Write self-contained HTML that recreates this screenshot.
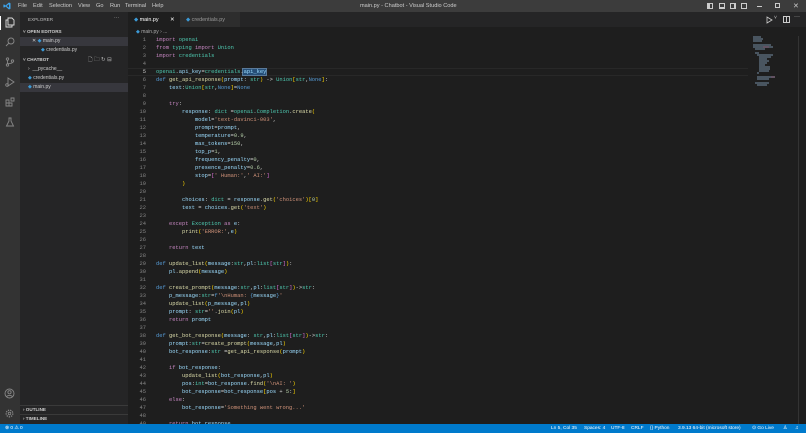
<!DOCTYPE html>
<html><head><meta charset="utf-8"><style>
*{margin:0;padding:0;box-sizing:border-box}
body{width:806px;height:433px;overflow:hidden;background:#1e1e1e;font-family:"Liberation Sans",sans-serif;position:relative;color:#ccc}
.abs{position:absolute}
#title{left:0;top:0;width:806px;height:12px;background:#3c3c3c;font-size:5.6px;color:#ccc}
#title span{position:absolute;top:3px}
#act{left:0;top:12px;width:20px;height:412px;background:#333}
#side{left:20px;top:12px;width:108px;height:412px;background:#252526;font-size:5px}
#side div{position:absolute;white-space:nowrap}
#tabs{left:128px;top:12px;width:678px;height:15px;background:#252526}
#status{left:0;top:424px;width:806px;height:9px;background:#007acc;color:#fff;font-size:4.8px}
#status span{position:absolute;top:2px;white-space:nowrap}
pre{position:absolute;left:156px;top:36px;font-family:"Liberation Mono",monospace;font-size:5.42px;line-height:8px;color:#d4d4d4}
#ln{position:absolute;left:128px;top:36px;width:18px;text-align:right;font-family:"Liberation Mono",monospace;font-size:5.42px;line-height:8px;color:#858585}
.k{color:#c586c0}.b{color:#569cd6}.f{color:#dcdcaa}.v{color:#9cdcfe}.t{color:#4ec9b0}.s{color:#ce9178}.n{color:#b5cea8}.y{color:#ffd700}.p{color:#da70d6}.c{color:#179fff}
svg{position:absolute}
</style></head><body>
<div id="title" class="abs">
<svg style="left:3px;top:2px" width="8" height="8" viewBox="0 0 8 8"><path d="M6 0.5L7.5 1.2V6.8L6 7.5L2.5 4.5L1 5.6L0.4 5.2V2.8L1 2.4L2.5 3.5ZM6 2.2L3.6 4L6 5.8Z" fill="#3ca2ea"/></svg>
<span style="left:18px">File</span><span style="left:33px">Edit</span><span style="left:49px">Selection</span><span style="left:78px">View</span><span style="left:96px">Go</span><span style="left:110px">Run</span><span style="left:125px">Terminal</span><span style="left:152px">Help</span>
<span style="left:360px">main.py - Chatbot - Visual Studio Code</span>
<div class="abs" style="left:707px;top:3px;width:6px;height:6px;border:1px solid #ccc;border-left-width:3px"></div>
<div class="abs" style="left:719px;top:3px;width:6px;height:6px;border:1px solid #ccc;border-bottom-width:2px"></div>
<div class="abs" style="left:730px;top:3px;width:6px;height:6px;border:1px solid #ccc;border-right-width:2px"></div>
<div class="abs" style="left:741px;top:3px;width:6px;height:6px;border:1px solid #ccc"></div>
<div class="abs" style="left:757px;top:6px;width:5px;height:1px;background:#ccc"></div>
<div class="abs" style="left:775px;top:3px;width:5px;height:5px;border:1px solid #ccc"></div>
<span style="left:793px;top:2px;font-size:7px">✕</span>
</div>
<div id="act" class="abs">
<div class="abs" style="left:0;top:4px;width:1px;height:14px;background:#fff"></div>
<svg style="left:5px;top:5px" width="10" height="11" viewBox="0 0 10 11" fill="none" stroke="#ddd" stroke-width="0.9"><path d="M3 1h4l2 2v5H3z M3 3H1v7h6V8"/></svg>
<svg style="left:5px;top:25px" width="10" height="10" viewBox="0 0 10 10" fill="none" stroke="#888" stroke-width="0.9"><circle cx="6" cy="4" r="3"/><path d="M4 6L1 9"/></svg>
<svg style="left:5px;top:45px" width="10" height="10" viewBox="0 0 10 10" fill="none" stroke="#888" stroke-width="0.9"><circle cx="2.5" cy="2" r="1.2"/><circle cx="2.5" cy="8" r="1.2"/><circle cx="7.5" cy="4" r="1.2"/><path d="M2.5 3.2v3.6M7.5 5.2C7.5 7 3 6 2.5 7"/></svg>
<svg style="left:5px;top:65px" width="10" height="10" viewBox="0 0 10 10" fill="none" stroke="#888" stroke-width="0.9"><path d="M3 1l6 4-6 4z"/><circle cx="2" cy="8" r="1.3"/></svg>
<svg style="left:5px;top:85px" width="10" height="10" viewBox="0 0 10 10" fill="none" stroke="#888" stroke-width="0.9"><path d="M1 3h3v3H1zM4 6h3v3H4zM1 6h3v3H1zM6 1h3v3H6z"/></svg>
<svg style="left:5px;top:105px" width="10" height="10" viewBox="0 0 10 10" fill="none" stroke="#888" stroke-width="0.9"><path d="M3.5 1h3M4 1v3L1.5 9h7L6 4V1"/></svg>
<svg style="left:4px;top:376px" width="11" height="11" viewBox="0 0 11 11" fill="none" stroke="#888" stroke-width="0.9"><circle cx="5.5" cy="5.5" r="4.5"/><circle cx="5.5" cy="4.3" r="1.6"/><path d="M2.6 8.8C3.5 7 7.5 7 8.4 8.8"/></svg>
<svg style="left:4px;top:396px" width="11" height="11" viewBox="0 0 11 11" fill="none" stroke="#888" stroke-width="1.3"><circle cx="5.5" cy="5.5" r="3.3" stroke-dasharray="1.3 1"/><circle cx="5.5" cy="5.5" r="1.3" stroke-width="0.8"/></svg>
</div>
<div id="side" class="abs">
<div style="left:8px;top:5px;color:#bbb;font-size:4.6px">EXPLORER</div>
<div style="left:94px;top:3px;color:#bbb">···</div>
<div style="left:3px;top:17px;color:#ccc;font-weight:bold;font-size:4.6px">˅ OPEN EDITORS</div>
<div style="left:0;top:25px;width:108px;height:9px;background:#37373d"></div>
<div style="left:12px;top:26px">✕ <span style="color:#3c9ad6">◆</span> main.py</div>
<div style="left:21px;top:35px"><span style="color:#3c9ad6">◆</span> credentials.py</div>
<div style="left:3px;top:45px;color:#ccc;font-weight:bold;font-size:4.6px">˅ CHATBOT</div>
<div style="left:68px;top:44px;color:#bbb;font-size:5.5px">🗋 🗀 ↻ ⊟</div>
<div style="left:8px;top:54px">›&nbsp; __pycache__</div>
<div style="left:8px;top:63px"><span style="color:#3c9ad6">◆</span> credentials.py</div>
<div style="left:0;top:71px;width:108px;height:9px;background:#37373d"></div>
<div style="left:8px;top:72px"><span style="color:#3c9ad6">◆</span> main.py</div>
<div style="left:0;top:393px;width:108px;height:1px;background:#3a3a3a"></div>
<div style="left:3px;top:395px;font-weight:bold;font-size:4.6px">› OUTLINE</div>
<div style="left:0;top:402px;width:108px;height:1px;background:#3a3a3a"></div>
<div style="left:3px;top:404px;font-weight:bold;font-size:4.6px">› TIMELINE</div>
</div>
<div id="tabs" class="abs">
<div class="abs" style="left:0;top:0;width:52px;height:15px;background:#1e1e1e;font-size:5.4px;color:#fff;padding:5px 0 0 6px"><span style="color:#3c9ad6">◆</span> main.py <span style="margin-left:10px">✕</span></div>
<div class="abs" style="left:52px;top:0;width:60px;height:15px;background:#2d2d2d;font-size:5.4px;color:#999;padding:5px 0 0 6px"><span style="color:#3c9ad6">◆</span> credentials.py</div>
<svg style="left:638px;top:4px" width="8" height="8" viewBox="0 0 8 8" fill="none" stroke="#ccc" stroke-width="0.8"><path d="M1 1l5 3-5 3z"/></svg>
<span class="abs" style="left:646px;top:3px;font-size:5px">˅</span>
<div class="abs" style="left:655px;top:4px;width:7px;height:7px;border:1px solid #ccc"></div><div class="abs" style="left:658px;top:4px;width:1px;height:7px;background:#ccc"></div>
<span class="abs" style="left:666px;top:2px;font-size:6px">···</span>
</div>
<div class="abs" style="left:136px;top:29px;font-size:5px;color:#aaa"><span style="color:#3c9ad6">◆</span> main.py › ...</div>
<div class="abs" style="left:128px;top:68px;width:620px;height:8px;border-top:1px solid #282828;border-bottom:1px solid #282828"></div>
<div class="abs" style="left:242px;top:68px;width:25px;height:8px;background:#264f78;border:1px solid #5a7a9a"></div>
<div id="ln">1<br>2<br>3<br>4<br><span style="color:#c6c6c6">5</span><br>6<br>7<br>8<br>9<br>10<br>11<br>12<br>13<br>14<br>15<br>16<br>17<br>18<br>19<br>20<br>21<br>22<br>23<br>24<br>25<br>26<br>27<br>28<br>29<br>30<br>31<br>32<br>33<br>34<br>35<br>36<br>37<br>38<br>39<br>40<br>41<br>42<br>43<br>44<br>45<br>46<br>47<br>48<br>49</div>
<pre><span class="k">import</span> <span class="t">openai</span>
<span class="k">from</span> <span class="t">typing</span> <span class="k">import</span> <span class="t">Union</span>
<span class="k">import</span> <span class="t">credentials</span>

<span class="t">openai</span>.<span class="v">api_key</span>=<span class="t">credentials</span>.<span class="v">api_key</span>
<span class="b">def</span> <span class="f">get_api_response</span><span class="y">(</span><span class="v">prompt</span>: <span class="t">str</span><span class="y">)</span> -&gt; <span class="t">Union</span><span class="y">[</span><span class="t">str</span>,<span class="b">None</span><span class="y">]</span>:
    <span class="v">text</span>:<span class="t">Union</span><span class="y">[</span><span class="t">str</span>,<span class="b">None</span><span class="y">]</span>=<span class="b">None</span>

    <span class="k">try</span>:
        <span class="v">response</span>: <span class="t">dict</span> =<span class="t">openai</span>.<span class="t">Completion</span>.<span class="f">create</span><span class="y">(</span>
            <span class="v">model</span>=<span class="s">'text-davinci-003'</span>,
            <span class="v">prompt</span>=<span class="v">prompt</span>,
            <span class="v">temperature</span>=<span class="n">0.9</span>,
            <span class="v">max_tokens</span>=<span class="n">150</span>,
            <span class="v">top_p</span>=<span class="n">1</span>,
            <span class="v">frequency_penalty</span>=<span class="n">0</span>,
            <span class="v">presence_penalty</span>=<span class="n">0.6</span>,
            <span class="v">stop</span>=<span class="p">[</span><span class="s">' Human:'</span>,<span class="s">' AI:'</span><span class="p">]</span>
        <span class="y">)</span>

        <span class="v">choices</span>: <span class="t">dict</span> = <span class="v">response</span>.<span class="f">get</span><span class="y">(</span><span class="s">'choices'</span><span class="y">)[</span><span class="n">0</span><span class="y">]</span>
        <span class="v">text</span> = <span class="v">choices</span>.<span class="f">get</span><span class="y">(</span><span class="s">'text'</span><span class="y">)</span>

    <span class="k">except</span> <span class="t">Exception</span> <span class="k">as</span> <span class="v">e</span>:
        <span class="f">print</span><span class="y">(</span><span class="s">'ERROR:'</span>,<span class="v">e</span><span class="y">)</span>

    <span class="k">return</span> <span class="v">text</span>

<span class="b">def</span> <span class="f">update_list</span><span class="y">(</span><span class="v">message</span>:<span class="t">str</span>,<span class="v">pl</span>:<span class="t">list</span><span class="p">[</span><span class="t">str</span><span class="p">]</span><span class="y">)</span>:
    <span class="v">pl</span>.<span class="f">append</span><span class="y">(</span><span class="v">message</span><span class="y">)</span>

<span class="b">def</span> <span class="f">create_prompt</span><span class="y">(</span><span class="v">message</span>:<span class="t">str</span>,<span class="v">pl</span>:<span class="t">list</span><span class="p">[</span><span class="t">str</span><span class="p">]</span><span class="y">)</span>-&gt;<span class="t">str</span>:
    <span class="v">p_message</span>:<span class="t">str</span>=<span class="b">f</span><span class="s">'\nHuman: </span><span class="b">{</span><span class="v">message</span><span class="b">}</span><span class="s">'</span>
    <span class="f">update_list</span><span class="y">(</span><span class="v">p_message</span>,<span class="v">pl</span><span class="y">)</span>
    <span class="v">prompt</span>: <span class="t">str</span>=<span class="s">''</span>.<span class="f">join</span><span class="y">(</span><span class="v">pl</span><span class="y">)</span>
    <span class="k">return</span> <span class="v">prompt</span>

<span class="b">def</span> <span class="f">get_bot_response</span><span class="y">(</span><span class="v">message</span>: <span class="t">str</span>,<span class="v">pl</span>:<span class="t">list</span><span class="p">[</span><span class="t">str</span><span class="p">]</span><span class="y">)</span>-&gt;<span class="t">str</span>:
    <span class="v">prompt</span>:<span class="t">str</span>=<span class="f">create_prompt</span><span class="y">(</span><span class="v">message</span>,<span class="v">pl</span><span class="y">)</span>
    <span class="v">bot_response</span>:<span class="t">str</span> =<span class="f">get_api_response</span><span class="y">(</span><span class="v">prompt</span><span class="y">)</span>

    <span class="k">if</span> <span class="v">bot_response</span>:
        <span class="f">update_list</span><span class="y">(</span><span class="v">bot_response</span>,<span class="v">pl</span><span class="y">)</span>
        <span class="v">pos</span>:<span class="t">int</span>=<span class="v">bot_response</span>.<span class="f">find</span><span class="y">(</span><span class="s">'\nAI: '</span><span class="y">)</span>
        <span class="v">bot_response</span>=<span class="v">bot_response</span><span class="y">[</span><span class="v">pos</span> + <span class="n">5</span>:<span class="y">]</span>
    <span class="k">else</span>:
        <span class="v">bot_response</span>=<span class="s">'Something went wrong...'</span>

    <span class="k">return</span> <span class="v">bot_response</span></pre>
<svg style="left:752px;top:36px" width="30" height="54" viewBox="0 0 30 54">
<g stroke-width="1" opacity="0.8">
<path d="M1 1h8M1 3h10M1 5h9M1 9h18M1 11h20M3 13h10M3 17h4M5 19h16M7 21h12M7 23h8M7 25h10M7 27h8M7 29h6M7 31h11M7 33h11M7 35h10M5 37h2M5 41h16M5 43h12M3 47h14M5 49h10" stroke="#8aa8c4"/>
<path d="M11 11h6M19 41h4" stroke="#c8a0c8"/>
</g></svg>
<div class="abs" style="left:798px;top:36px;width:8px;height:388px;border-left:1px solid #333"></div>
<div id="status" class="abs">
<span style="left:5px">⊗ 0 ⚠ 0</span>
<span style="left:551px">Ln 5, Col 35</span>
<span style="left:584px">Spaces: 4</span>
<span style="left:611px">UTF-8</span>
<span style="left:631px">CRLF</span>
<span style="left:650px">{} Python</span>
<span style="left:678px">3.9.13 64-bit (microsoft store)</span>
<span style="left:752px">⊙ Go Live</span>
<span style="left:783px">♙</span>
<span style="left:795px">♫</span>
</div>
</body></html>
